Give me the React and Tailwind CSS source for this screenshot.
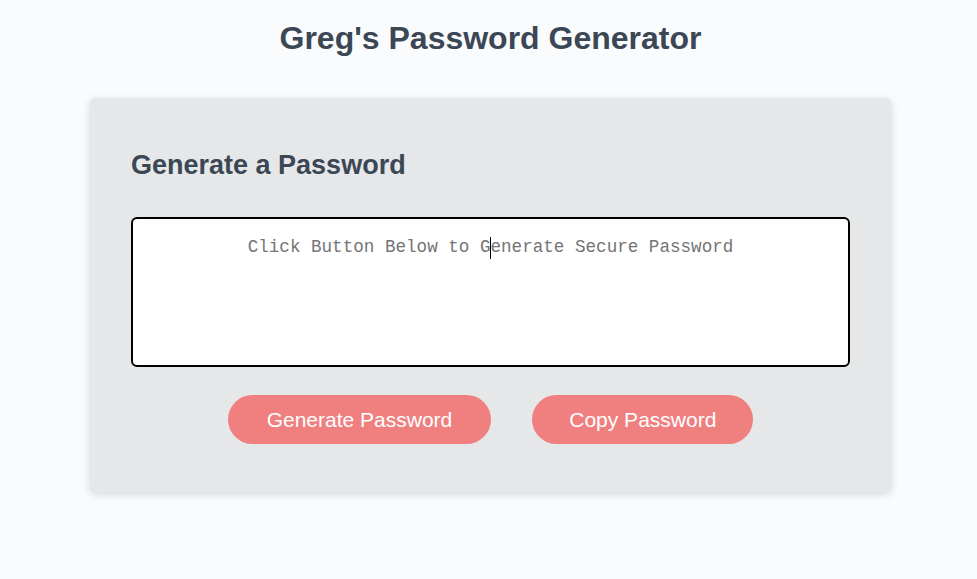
export default function App() {
  return (
    <div className="min-h-screen bg-[#f9fbfd] pl-[4px] text-[#3b4754]" style={{ fontFamily: '"Liberation Sans", Arial, sans-serif' }}>
      <header className="pt-[20px] text-center">
        <h1 className="text-[32px] leading-[37px] font-bold">Greg's Password Generator</h1>
      </header>
      <main className="mt-[41px] px-5">
        <div className="mx-auto w-[801px] rounded-[5px] bg-[#e6e7e9] px-[41px] pt-[52px] pb-[48px] shadow-[0_2px_8px_rgba(0,0,0,0.15)]">
          <h2 className="text-[27px] leading-[31px] font-bold">Generate a Password</h2>
          <div className="relative mt-[36px]">
            <textarea
              readOnly
              placeholder="Click Button Below to Generate Secure Password"
              className="block h-[150px] w-full resize-none overflow-hidden rounded-[6px] border-2 border-black bg-white px-[15px] pt-[18px] text-center text-[17.6px] leading-[20px] text-[#333] placeholder:text-[#757575] outline-none"
              style={{ fontFamily: '"Liberation Mono", "DejaVu Sans Mono", monospace' }}
            />
            <span className="absolute left-[359px] top-[20px] h-[22px] w-px bg-black" />
          </div>
          <div className="mt-[28px] flex justify-center gap-[41px]">
            <button className="h-[49px] rounded-full bg-[#f08080] px-[39px] text-[21px] text-white">Generate Password</button>
            <button className="h-[49px] rounded-full bg-[#f08080] px-[37px] text-[21px] text-white">Copy Password</button>
          </div>
        </div>
      </main>
    </div>
  );
}
